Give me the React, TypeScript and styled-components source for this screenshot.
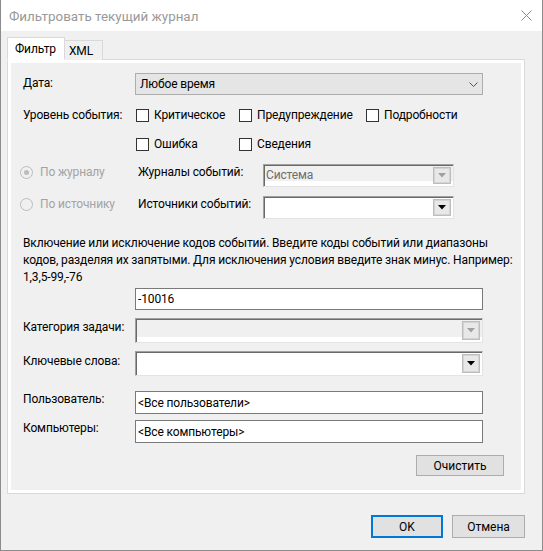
import React from 'react';
import styled, { createGlobalStyle } from 'styled-components';

const Global = createGlobalStyle`
  html, body { margin: 0; padding: 0; background: #fff; }
  body { font-family: Roboto, "Noto Sans", sans-serif; font-size: 12px; color: #000; letter-spacing: -0.14px; }
  * { box-sizing: border-box; }
`;

const Window = styled.div`
  width: 543px;
  height: 551px;
  border: 1px solid #8c8c8c;
  border-top: none;
  background: #f0f0f0;
  display: flex;
  flex-direction: column;
`;

const TitleBar = styled.div`
  height: 31px;
  background: #fff;
  display: flex;
  align-items: center;
  justify-content: space-between;
  padding: 0 10px 0 8px;
  flex: none;
`;

const Title = styled.div`
  font-size: 13.4px;
  color: #999;
  line-height: 20px;
  padding-top: 2px;
  letter-spacing: 0;
`;

const Body = styled.div`
  padding: 6px 0 0 6px;
  display: flex;
  flex-direction: column;
`;

const TabStrip = styled.div`
  display: flex;
  align-items: flex-end;
  height: 23px;
  position: relative;
  z-index: 1;
  margin-bottom: -1px;
`;

const Tab = styled.div<{ $active?: boolean }>`
  height: ${p => (p.$active ? 23 : 20)}px;
  padding: ${p => (p.$active ? '0 8px 0 7px' : '0 9px 0 4px')};
  background: ${p => (p.$active ? '#fff' : '#f0f0f0')};
  border: 1px solid #d9d9d9;
  border-bottom: ${p => (p.$active ? '1px solid #fff' : 'none')};
  border-left: ${p => (p.$active ? '1px solid #d9d9d9' : 'none')};
  display: flex;
  align-items: center;
  line-height: 16px;
`;

const Panel = styled.div`
  width: 518px;
  height: 435px;
  border: 1px solid #d9d9d9;
  background: #f0f0f0;
  box-shadow: inset 0 0 0 3px #fff;
  padding: 0 0 0 12px;
  display: flex;
  flex-direction: column;
`;

const Row = styled.div<{ $mt: number }>`
  display: flex;
  align-items: flex-start;
  margin-top: ${p => p.$mt}px;
`;

const Label = styled.div<{ $pt?: number; $w?: number }>`
  width: ${p => p.$w ?? 115}px;
  flex: none;
  padding-left: 3px;
  padding-top: ${p => p.$pt ?? 0}px;
  line-height: 16px;
  white-space: nowrap;
`;

const Dropdown = styled.div`
  width: 348px;
  height: 22px;
  border: 1px solid #adadad;
  background: #e5e5e5;
  display: flex;
  align-items: center;
  justify-content: space-between;
  padding: 0 4px 0 4px;
  line-height: 16px;
`;

const CheckGrid = styled.div`
  display: grid;
  grid-template-columns: 103px 127px auto;
  row-gap: 13px;
`;

const CheckItem = styled.label`
  display: flex;
  align-items: center;
  height: 16px;
  line-height: 16px;
  white-space: nowrap;
`;

const CheckBox = styled.span`
  width: 13px;
  height: 13px;
  border: 1px solid #333;
  background: #fff;
  margin: 0 5px 0 1px;
  flex: none;
`;

const RadioRow = styled.div<{ $mt: number }>`
  display: grid;
  grid-template-columns: 115px 128px 191px;
  align-items: start;
  margin-top: ${p => p.$mt}px;
`;

const RadioItem = styled.div<{ $pt: number }>`
  display: flex;
  align-items: center;
  gap: 7px;
  color: #a3a3a3;
  line-height: 16px;
  padding-top: ${p => p.$pt}px;
  white-space: nowrap;
`;

const RadioCircle = styled.span<{ $checked?: boolean }>`
  width: 13px;
  height: 13px;
  border-radius: 50%;
  border: 1px solid #bcbcbc;
  background: #f0f0f0;
  display: flex;
  align-items: center;
  justify-content: center;
  flex: none;
  &::after {
    content: '';
    width: 5px;
    height: 5px;
    border-radius: 50%;
    background: ${p => (p.$checked ? '#bcbcbc' : 'transparent')};
  }
`;

const Combo = styled.div<{ $w: number; $h: number; $disabled?: boolean }>`
  width: ${p => p.$w}px;
  height: ${p => p.$h}px;
  border: 1px solid;
  border-color: #a0a0a0 #e3e3e3 #e3e3e3 #a0a0a0;
  box-shadow: inset 1px 1px 0 #696969;
  background: ${p =>
    p.$disabled ? 'linear-gradient(#f0f0f0 0 calc(100% - 5px), #fff 0)' : '#fff'};
  display: flex;
  align-items: stretch;
  justify-content: space-between;
  padding: 1px 1px 1px 2px;
  color: #6d6d6d;
  line-height: 16px;
`;

const ComboText = styled.span`
  padding-top: 1px;
`;

const ComboButton = styled.span`
  width: 18px;
  border: 1px solid #bdbdbd;
  box-shadow: inset 0 0 0 1px #d4d4d4;
  background: #e8e8e8;
  display: flex;
  align-items: center;
  justify-content: center;
  margin: 1px 1px 1px 0;
`;

const Paragraph = styled.div`
  margin-top: 16px;
  padding-left: 3px;
  line-height: 17px;
  white-space: nowrap;
`;

const TextBox = styled.div<{ $h: number }>`
  width: 348px;
  height: ${p => p.$h}px;
  border: 1px solid #7a7a7a;
  background: #fff;
  padding: 0 2px;
  display: flex;
  align-items: center;
  line-height: 16px;
  white-space: nowrap;
`;

const Indented = styled.div<{ $mt: number }>`
  margin-top: ${p => p.$mt}px;
  margin-left: 115px;
`;

const ButtonRow = styled.div<{ $mt: number; $pr: number }>`
  display: flex;
  justify-content: flex-end;
  gap: 9px;
  margin-top: ${p => p.$mt}px;
  padding-right: ${p => p.$pr}px;
`;

const Button = styled.button<{ $w: number; $h: number; $default?: boolean }>`
  width: ${p => p.$w}px;
  height: ${p => p.$h}px;
  font-family: inherit;
  font-size: 12px;
  color: #000;
  background: #e1e1e1;
  border: ${p => (p.$default ? '2px solid #0078d7' : '1px solid #adadad')};
  padding: 0;
  line-height: 16px;
`;

const Tri = ({ color }: { color: string }) => (
  <svg width="8" height="5" viewBox="0 0 8 5">
    <polygon points="0,0 8,0 4,4.5" fill={color} />
  </svg>
);

const Chevron = () => (
  <svg width="9" height="5" viewBox="0 0 9 5">
    <polyline points="0.5,0.5 4.5,4.5 8.5,0.5" fill="none" stroke="#555" strokeWidth="1" />
  </svg>
);

const CloseIcon = () => (
  <svg width="11" height="11" viewBox="0 0 11 11">
    <path d="M0.5 0.5 L10.5 10.5 M10.5 0.5 L0.5 10.5" stroke="#8a8a8a" strokeWidth="1" fill="none" />
  </svg>
);

export default function App() {
  return (
    <>
      <Global />
      <Window>
        <TitleBar>
          <Title>Фильтровать текущий журнал</Title>
          <CloseIcon />
        </TitleBar>
        <Body>
          <TabStrip>
            <Tab $active>Фильтр</Tab>
            <Tab>XML</Tab>
          </TabStrip>
          <Panel>
            <Row $mt={13}>
              <Label $pt={2}>Дата:</Label>
              <Dropdown>
                <span>Любое время</span>
                <Chevron />
              </Dropdown>
            </Row>
            <Row $mt={12}>
              <Label>Уровень события:</Label>
              <CheckGrid>
                <CheckItem><CheckBox />Критическое</CheckItem>
                <CheckItem><CheckBox />Предупреждение</CheckItem>
                <CheckItem><CheckBox />Подробности</CheckItem>
                <CheckItem><CheckBox />Ошибка</CheckItem>
                <CheckItem><CheckBox />Сведения</CheckItem>
              </CheckGrid>
            </Row>
            <RadioRow $mt={12}>
              <RadioItem $pt={0}><RadioCircle $checked />По журналу</RadioItem>
              <Label $w={128} $pt={0}>Журналы событий:</Label>
              <Combo $w={191} $h={23} $disabled>
                <ComboText>Система</ComboText>
                <ComboButton><Tri color="#a0a0a0" /></ComboButton>
              </Combo>
            </RadioRow>
            <RadioRow $mt={9}>
              <RadioItem $pt={0}><RadioCircle />По источнику</RadioItem>
              <Label $w={128} $pt={0}>Источники событий:</Label>
              <Combo $w={191} $h={23}>
                <ComboText />
                <ComboButton><Tri color="#000" /></ComboButton>
              </Combo>
            </RadioRow>
            <Paragraph>
              Включение или исключение кодов событий. Введите коды событий или диапазоны
              <br />
              кодов, разделяя их запятыми. Для исключения условия введите знак минус. Например:
              <br />
              1,3,5-99,-76
            </Paragraph>
            <Indented $mt={2}>
              <TextBox $h={22}>-10016</TextBox>
            </Indented>
            <Row $mt={8}>
              <Label $pt={1}>Категория задачи:</Label>
              <Combo $w={348} $h={25} $disabled>
                <ComboText />
                <ComboButton><Tri color="#a0a0a0" /></ComboButton>
              </Combo>
            </Row>
            <Row $mt={8}>
              <Label $pt={2}>Ключевые слова:</Label>
              <Combo $w={348} $h={25}>
                <ComboText />
                <ComboButton><Tri color="#000" /></ComboButton>
              </Combo>
            </Row>
            <Row $mt={15}>
              <Label $pt={0}>Пользователь:</Label>
              <TextBox $h={23}>&lt;Все пользователи&gt;</TextBox>
            </Row>
            <Row $mt={6}>
              <Label $pt={0}>Компьютеры:</Label>
              <TextBox $h={23}>&lt;Все компьютеры&gt;</TextBox>
            </Row>
            <ButtonRow $mt={12} $pr={20}>
              <Button $w={88} $h={21}>Очистить</Button>
            </ButtonRow>
          </Panel>
          <ButtonRow $mt={21} $pr={17}>
            <Button $w={72} $h={23} $default>OK</Button>
            <Button $w={73} $h={23}>Отмена</Button>
          </ButtonRow>
        </Body>
      </Window>
    </>
  );
}
